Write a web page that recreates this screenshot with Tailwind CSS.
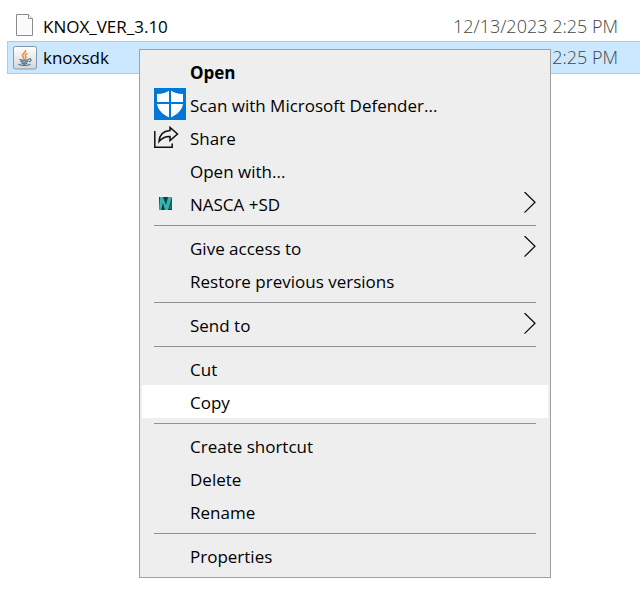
<!DOCTYPE html>
<html lang="en">
<head>
<meta charset="utf-8">
<meta name="viewport" content="width=device-width, initial-scale=1">
<title>Files</title>
<script src="https://cdn.jsdelivr.net/npm/@tailwindcss/browser@4"></script>
</head>
<body class="relative min-h-screen bg-white pt-[9px] pl-[7px] font-['Open_Sans','Noto_Sans',sans-serif] text-[17px] leading-[35px] text-black">

<table class="w-full border-separate border-spacing-0">
  <tbody>
    <tr>
      <td class="h-8 p-0 pl-2">
        <div class="flex h-8 items-start">
          <svg class="mt-1 h-6 w-7 shrink-0" viewBox="0 0 28 24" aria-hidden="true">
            <path d="M1.500 1.500H13.500L17.500 5.500V22.500H1.500Z" fill="#fbfbfb" stroke="#8c8c8c"/>
            <path d="M13.500 1.500V5.500H17.500" fill="#fff" stroke="#8c8c8c"/>
          </svg>
          <span>KNOX_VER_3.10</span>
        </div>
      </td>
      <td class="p-0 pr-[22px] text-right text-[18px] font-light text-[#444]"><div class="h-8">12/13/2023 2:25 PM</div></td>
    </tr>
    <tr class="bg-[#cce8ff]">
      <td class="border-y border-l border-[#99d1ff] p-0 pl-[5px]">
        <div class="flex h-[31px] items-center gap-[6px]">
          <svg class="size-6 shrink-0" viewBox="0 0 24 24" aria-hidden="true">
            <defs><linearGradient id="tile" x2="0" y2="1"><stop stop-color="#fff"/><stop offset="1" stop-color="#d3d6d9"/></linearGradient></defs>
            <rect x=".5" y=".5" width="23" height="22.500" rx="2" fill="url(#tile)" stroke="#8797a5"/>
            <path d="M12.500 4C13.500 6.500 9 7.500 9.500 9.500C9.700 11 11 11.500 11 13M14.500 7.500C12 8.500 11.800 9.500 12.800 10.800C13.200 11.500 13 12 12.500 12.800" fill="none" stroke="#ef8a35" stroke-width="1.500"/>
            <path d="M6.500 13.200C6.500 14.500 15.500 14.300 16 13.200M7.500 15.300C9 16.300 13.500 16.300 15 15.300M8.500 17.200C10 18 13 17.800 14.200 17.200M15.800 12.800C19 12.300 18.500 15.300 15.800 16M5.500 18.200C7 19.900 16 19.700 17.500 18.200" fill="none" stroke="#3f6d90" stroke-width="1.200"/>
          </svg>
          <span>knoxsdk</span>
        </div>
      </td>
      <td class="border-y border-[#99d1ff] p-0 pr-[22px] text-right text-[18px] font-light text-[#444]"><div class="flex h-[31px] items-center justify-end">12/13/2023 2:25 PM</div></td>
    </tr>
  </tbody>
</table>

<div role="menu" aria-label="File actions" class="absolute top-[49px] left-[139px] flex w-[412px] flex-col border border-[#a0a0a0] bg-[#eeeeee] px-[2px] py-[5px]">
  <button role="menuitem" class="flex h-[33px] items-start pr-3 pl-12 font-bold hover:bg-white">Open</button>
  <button role="menuitem" class="flex h-[33px] items-start gap-1 pr-3 pl-3 hover:bg-white">
    <svg class="size-8 shrink-0" viewBox="0 0 32 32" aria-hidden="true">
      <rect width="32" height="32" fill="#0078d7"/>
      <path d="M16 2C12.500 4.700 8 6 3 6V14.500C3 21.500 8.500 26.500 16 30C23.500 26.500 29 21.500 29 14.500V6C24 6 19.500 4.700 16 2Z" fill="#fff"/>
      <path d="M16 1V31M2 15H30" stroke="#0078d7" stroke-width="2"/>
    </svg>
    <span>Scan with Microsoft Defender...</span>
  </button>
  <button role="menuitem" class="flex h-[33px] items-start gap-1 pr-3 pl-3 hover:bg-white">
    <svg class="size-8 shrink-0" viewBox="0 0 32 32" fill="none" stroke="#111" stroke-width="1.500" aria-hidden="true">
      <path d="M.8 10V26.200H18.200V22.500"/>
      <path d="M5 20.500C5.500 13 9 10 16 9.500V6.500L23.500 13L16 19.500V15.500C11 15.300 8 17 5 20.500Z"/>
    </svg>
    <span>Share</span>
  </button>
  <button role="menuitem" class="flex h-[33px] items-start pr-3 pl-12 hover:bg-white">Open with...</button>
  <button role="menuitem" aria-haspopup="menu" class="flex h-[33px] items-start gap-1 pr-3 pl-3 hover:bg-white">
    <svg class="size-8 shrink-0" viewBox="0 0 32 32" aria-hidden="true">
      <rect x="5" y="10" width="13" height="13" fill="#12384b"/>
      <path d="M6 10H9L12 18L14 10H18L14 23H11L9 16L7 23H5Z" fill="#36b5aa"/>
      <path d="M15 22L17.500 13V22Z" fill="#227c80"/>
    </svg>
    <span>NASCA +SD</span>
    <svg class="mt-[5px] ml-auto h-6 w-3 shrink-0" viewBox="0 0 12 24" fill="none" stroke="#111" stroke-width="1.300" aria-hidden="true"><path d="M.5 0L11 10.300L.5 20.600"/></svg>
  </button>
  <hr class="mx-3 my-[5px] border-[#919191]">
  <button role="menuitem" aria-haspopup="menu" class="flex h-[33px] items-start pr-3 pl-12 hover:bg-white">
    <span>Give access to</span>
    <svg class="mt-[5px] ml-auto h-6 w-3 shrink-0" viewBox="0 0 12 24" fill="none" stroke="#111" stroke-width="1.300" aria-hidden="true"><path d="M.5 0L11 10.300L.5 20.600"/></svg>
  </button>
  <button role="menuitem" class="flex h-[33px] items-start pr-3 pl-12 hover:bg-white">Restore previous versions</button>
  <hr class="mx-3 my-[5px] border-[#919191]">
  <button role="menuitem" aria-haspopup="menu" class="flex h-[33px] items-start pr-3 pl-12 hover:bg-white">
    <span>Send to</span>
    <svg class="mt-[5px] ml-auto h-6 w-3 shrink-0" viewBox="0 0 12 24" fill="none" stroke="#111" stroke-width="1.300" aria-hidden="true"><path d="M.5 0L11 10.300L.5 20.600"/></svg>
  </button>
  <hr class="mx-3 my-[5px] border-[#919191]">
  <button role="menuitem" class="flex h-[33px] items-start pr-3 pl-12 hover:bg-white">Cut</button>
  <button role="menuitem" class="flex h-[33px] items-start bg-white pr-3 pl-12">Copy</button>
  <hr class="mx-3 my-[5px] border-[#919191]">
  <button role="menuitem" class="flex h-[33px] items-start pr-3 pl-12 hover:bg-white">Create shortcut</button>
  <button role="menuitem" class="flex h-[33px] items-start pr-3 pl-12 hover:bg-white">Delete</button>
  <button role="menuitem" class="flex h-[33px] items-start pr-3 pl-12 hover:bg-white">Rename</button>
  <hr class="mx-3 my-[5px] border-[#919191]">
  <button role="menuitem" class="flex h-[33px] items-start pr-3 pl-12 hover:bg-white">Properties</button>
</div>

</body>
</html>
